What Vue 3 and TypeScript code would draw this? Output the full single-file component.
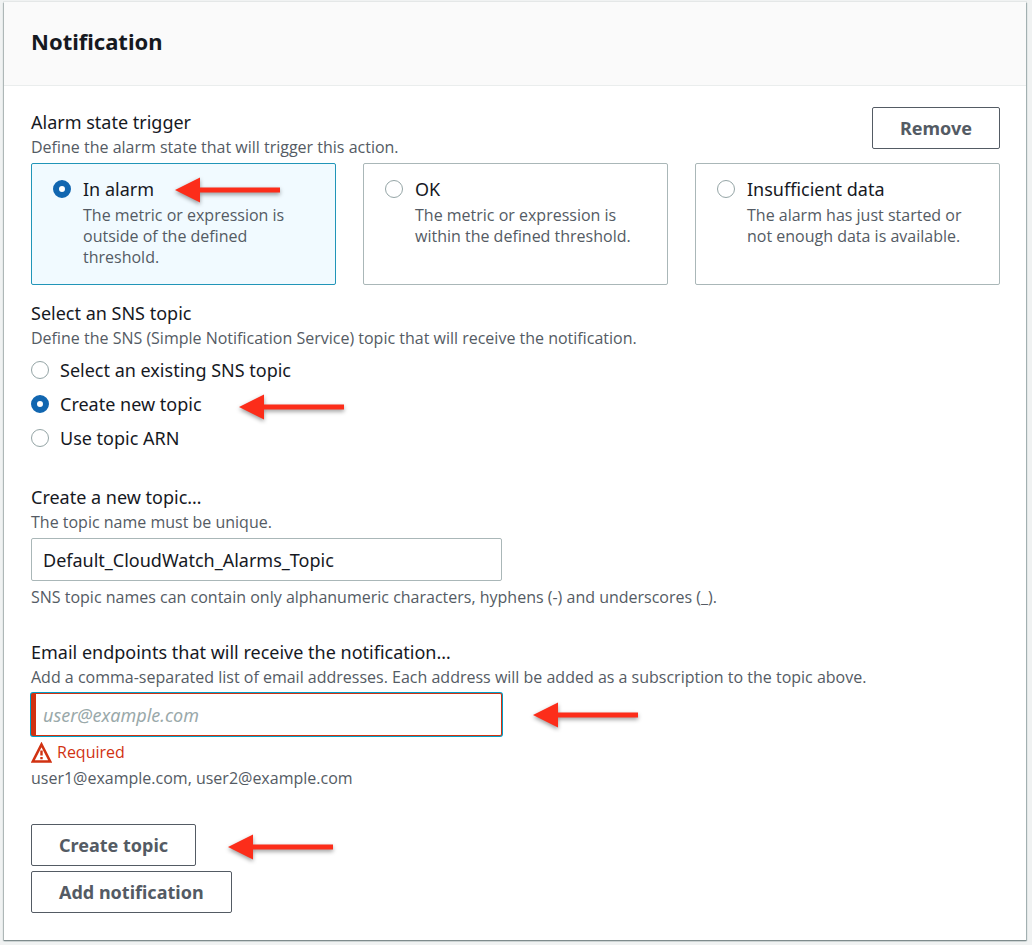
<script setup lang="ts">
import { ref } from 'vue'

interface StateOption {
  value: string
  title: string
  text: string
}

const states: StateOption[] = [
  { value: 'alarm', title: 'In alarm', text: 'The metric or expression is outside of the defined threshold.' },
  { value: 'ok', title: 'OK', text: 'The metric or expression is within the defined threshold.' },
  { value: 'insufficient', title: 'Insufficient data', text: 'The alarm has just started or not enough data is available.' },
]

const topicModes = [
  { value: 'existing', title: 'Select an existing SNS topic' },
  { value: 'create', title: 'Create new topic' },
  { value: 'arn', title: 'Use topic ARN' },
]

const alarmState = ref('alarm')
const topicMode = ref('create')
const topicName = ref('Default_CloudWatch_Alarms_Topic')
const emails = ref('')
</script>

<template>
  <main class="panel">
    <header class="panel-header">
      <h2>Notification</h2>
    </header>

    <div class="panel-body">
      <section>
        <div class="trigger-head">
          <div class="trigger-text">
            <h3 id="trigger-label" class="label">Alarm state trigger</h3>
            <p class="hint">Define the alarm state that will trigger this action.</p>
          </div>
          <button type="button" class="btn">Remove</button>
        </div>
        <div class="tiles" role="radiogroup" aria-labelledby="trigger-label">
          <label v-for="s in states" :key="s.value" class="tile" :class="{ selected: alarmState === s.value }">
            <input v-model="alarmState" type="radio" name="state" class="radio" :value="s.value" />
            <span class="tile-copy">
              <span class="option-title">{{ s.title }}</span>
              <span class="hint">{{ s.text }}</span>
            </span>
            <svg v-if="s.value === 'alarm'" class="arrow arrow-tile" viewBox="0 0 106 26" aria-hidden="true">
              <path d="M0 13 25 0.500V10.500H105V15.500H25V25.500Z" />
            </svg>
          </label>
        </div>
      </section>

      <section class="topic">
        <h3 id="topic-label" class="label">Select an SNS topic</h3>
        <p class="hint">Define the SNS (Simple Notification Service) topic that will receive the notification.</p>
        <div class="radio-list" role="radiogroup" aria-labelledby="topic-label">
          <label v-for="m in topicModes" :key="m.value" class="radio-row">
            <input v-model="topicMode" type="radio" name="topic" class="radio" :value="m.value" />
            <span class="option-title">{{ m.title }}</span>
            <svg v-if="m.value === 'create'" class="arrow arrow-mode" viewBox="0 0 106 26" aria-hidden="true">
              <path d="M0 13 25 0.500V10.500H105V15.500H25V25.500Z" />
            </svg>
          </label>
        </div>
      </section>

      <section class="name">
        <label class="label" for="topic-name">Create a new topic…</label>
        <p class="hint">The topic name must be unique.</p>
        <div class="field">
          <input id="topic-name" v-model="topicName" type="text" class="text-input" />
        </div>
        <p class="hint">SNS topic names can contain only alphanumeric characters, hyphens (-) and underscores (_).</p>
      </section>

      <section class="emails">
        <label class="label" for="emails">Email endpoints that will receive the notification…</label>
        <p class="hint">Add a comma-separated list of email addresses. Each address will be added as a subscription to the topic above.</p>
        <div class="field">
          <input id="emails" v-model="emails" type="text" class="text-input invalid" placeholder="user@example.com" />
          <svg class="arrow arrow-field" viewBox="0 0 106 26" aria-hidden="true">
            <path d="M0 13 25 0.500V10.500H105V15.500H25V25.500Z" />
          </svg>
        </div>
        <p class="hint error">
          <svg class="warning" viewBox="0 0 21 21" aria-hidden="true">
            <path d="M10.500 2.500 19.200 19.500H1.800Z" fill="none" stroke="currentColor" stroke-width="2.600" />
            <path d="M10.500 8.500V13.500M10.500 15V17.200" fill="none" stroke="currentColor" stroke-width="2.400" />
          </svg>
          Required
        </p>
        <p class="hint">user1@example.com, user2@example.com</p>
      </section>

      <div class="actions">
        <div class="action">
          <button type="button" class="btn">Create topic</button>
          <svg class="arrow arrow-action" viewBox="0 0 106 26" aria-hidden="true">
            <path d="M0 13 25 0.500V10.500H105V15.500H25V25.500Z" />
          </svg>
        </div>
        <button type="button" class="btn">Add notification</button>
      </div>
    </div>
  </main>
</template>

<style>
body {
  background: #f0f2f2;
}
</style>

<style scoped>
.panel {
  margin: 2px 6px 5px 4px;
  background: #fff;
  box-shadow: 0 1px 1px 0 #7f8c8d, 1px 1px 1px 0 #aab7b8, -1px 1px 1px 0 #b8c0c0, 0 0 0 1px #e4e7e7;
  font-family: "Noto Sans", "Open Sans", sans-serif;
  color: #16191f;
}

.panel-header {
  padding: 24px 27px 29px;
  background: #fafafa;
  border-bottom: 1px solid #eaeded;
}

h2 {
  margin: 0;
  font-size: 22px;
  line-height: 30px;
  font-weight: 700;
}

.panel-body {
  padding: 21px 26px 27px 27px;
}

.trigger-head {
  display: flex;
  justify-content: space-between;
  align-items: flex-start;
  min-height: 51px;
}

.trigger-text {
  align-self: flex-end;
}

.label {
  display: block;
  margin: 0 0 2px;
  font-size: 18px;
  line-height: 26px;
  font-weight: 400;
}

.hint {
  display: block;
  margin: 0;
  font-family: "Open Sans", "Noto Sans", sans-serif;
  font-size: 16px;
  line-height: 21px;
  color: #545b64;
}

.tiles {
  display: grid;
  grid-template-columns: repeat(3, 1fr);
  gap: 27px;
  margin-top: 5px;
}

.tile {
  position: relative;
  display: flex;
  gap: 12px;
  padding: 13px 31px 16px 21px;
  border: 1px solid #aab7b8;
  border-radius: 2px;
}

.tile.selected {
  border-color: #2195b8;
  background: #f1faff;
}

.tile .radio {
  margin-top: 3px;
}

.tile-copy {
  display: flex;
  flex-direction: column;
  gap: 4px;
}

.option-title {
  font-size: 18px;
  line-height: 24px;
}

.radio {
  appearance: none;
  flex: none;
  box-sizing: border-box;
  width: 18px;
  height: 18px;
  margin: 0;
  border: 1px solid #95a5a6;
  border-radius: 50%;
  background: #fff;
}

.radio:checked {
  border: 6px solid #1166b0;
}

.topic {
  margin-top: 15px;
}

.radio-list {
  display: flex;
  flex-direction: column;
  gap: 10px;
  margin-top: 9px;
}

.radio-row {
  position: relative;
  display: flex;
  align-items: center;
  gap: 11px;
}

.name {
  margin-top: 34px;
}

.emails {
  margin-top: 31px;
}

.field {
  position: relative;
  display: flex;
  width: 49%;
  max-width: 471px;
  margin: 5px 0 6px;
}

.text-input {
  box-sizing: border-box;
  width: 100%;
  height: 43px;
  padding: 0 11px;
  border: 1px solid #aab7b8;
  border-radius: 2px;
  background: #fff;
  font: inherit;
  font-size: 18px;
  color: #16191f;
}

.text-input.invalid {
  padding-left: 7px;
  border-color: #d13212;
  border-left-width: 5px;
  outline: none;
  box-shadow: 0 0 0 1px #00a1c9;
}

.text-input::placeholder {
  color: #9aa9aa;
  font-style: italic;
  opacity: 1;
}

.error {
  display: flex;
  align-items: center;
  gap: 5px;
  margin-bottom: 5px;
  color: #d13212;
}

.warning {
  width: 21px;
  height: 21px;
}

.actions {
  display: flex;
  flex-direction: column;
  align-items: flex-start;
  gap: 5px;
  margin-top: 35px;
}

.action {
  position: relative;
}

.btn {
  display: block;
  height: 42px;
  padding: 0 27px;
  border: 1px solid #545b64;
  border-radius: 2px;
  background: #fff;
  font: inherit;
  font-size: 18px;
  font-weight: 700;
  color: #545b64;
}

.arrow {
  position: absolute;
  width: 106px;
  height: 26px;
  overflow: visible;
  fill: #fc2d1a;
  filter: drop-shadow(0 2px 2px rgba(0, 0, 0, 0.4));
}

.arrow-tile {
  top: 13px;
  left: 143px;
}

.arrow-mode {
  top: 2px;
  left: 208px;
}

.arrow-field {
  top: 9px;
  left: calc(100% + 31px);
}

.arrow-action {
  top: 10px;
  left: calc(100% + 32px);
}
</style>
